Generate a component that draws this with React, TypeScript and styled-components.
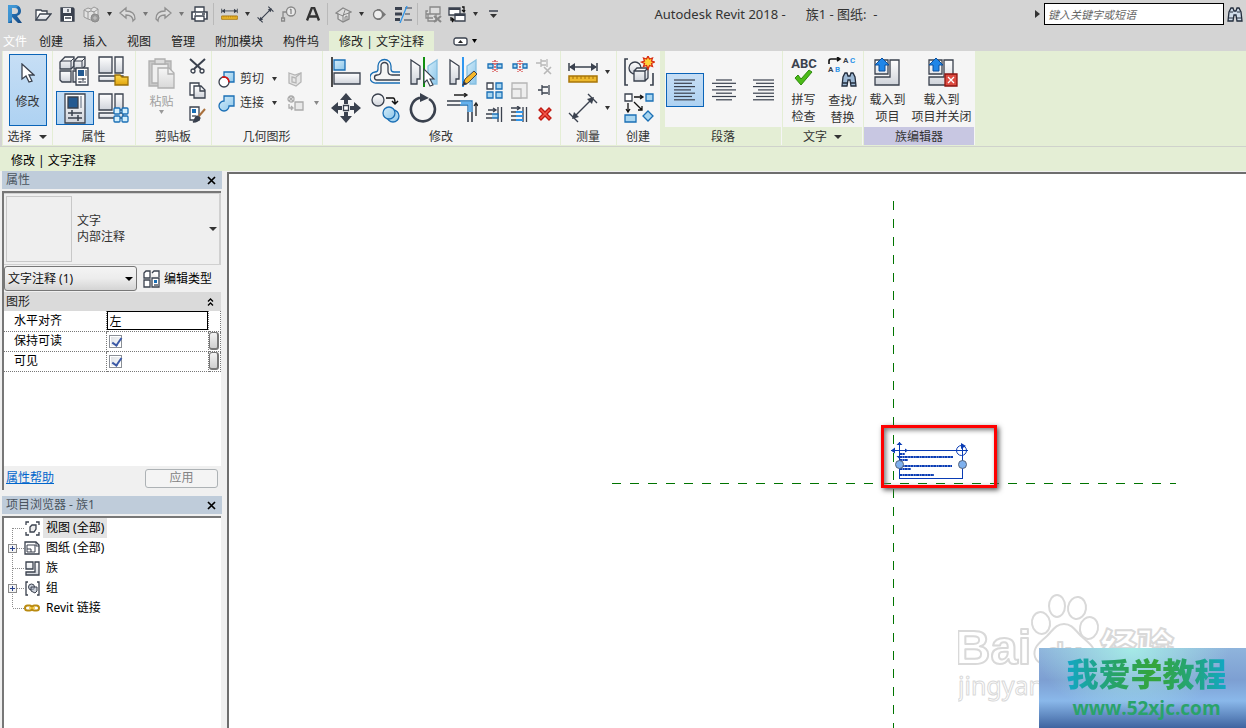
import React from "react";
import styled, { createGlobalStyle } from "styled-components";

const GlobalStyle = createGlobalStyle`
  * { box-sizing: border-box; }
  body {
    margin: 0;
    font: 12px/16px "Noto Sans", "Noto Sans CJK SC", sans-serif;
    color: #1e1e1e;
    background: #f0f0f0;
  }
  button, input, select { font: inherit; color: inherit; margin: 0; padding: 0; }
  svg { display: block; flex: none; }
`;

const ink = "#3a414e";
const blue = "#1a6fb5";
const sky = "#a9d6f0";
const green = "#e4eed5";

/* ---------- page frame ---------- */

const Page = styled.div`
  display: flex;
  flex-direction: column;
  min-height: 100vh;
  overflow: hidden;
`;

const TitleBar = styled.header`
  display: flex;
  align-items: center;
  height: 28px;
  padding-left: 3px;
  background: #d4d4d4;
`;

const QuickButton = styled.button<{ $gap?: boolean }>`
  display: flex;
  align-items: center;
  justify-content: center;
  width: 24px;
  height: 24px;
  margin-right: ${(p) => (p.$gap ? 4 : 0)}px;
  border: 0;
  background: none;
`;

const SearchButton = styled(QuickButton)`
  width: 22px;
`;

const CaretButton = styled.button`
  display: flex;
  align-items: center;
  justify-content: center;
  width: 12px;
  min-height: 24px;
  border: 0;
  background: none;
`;

const QuickDivider = styled.span`
  width: 1px;
  height: 22px;
  margin: 0 3px 0 2px;
  background: #b9b9b9;
`;

const WindowTitle = styled.h1`
  display: flex;
  flex: 1;
  justify-content: center;
  gap: 20px;
  margin: 0;
  padding-right: 8px;
  font-size: 13px;
  font-weight: 400;
  white-space: pre;
  color: #333;
`;

const SearchBox = styled.input`
  width: 180px;
  height: 22px;
  margin: 0 0 0 4px;
  padding: 0 3px;
  border: 1px solid #000;
  background: #fff;
  &::placeholder { color: #666; font-size: 11px; font-style: italic; opacity: 1; }
`;

const TabBar = styled.nav`
  display: flex;
  align-items: flex-end;
  height: 23px;
  padding-top: 3px;
  background: #d4d4d4;
`;

const Tab = styled.button<{ $file?: boolean; $active?: boolean }>`
  height: 20px;
  padding: ${(p) => (p.$file ? "2px 2px 0 3px" : "2px 10px 0")};
  border: 0;
  white-space: nowrap;
  background: ${(p) => (p.$active ? green : "none")};
  color: ${(p) => (p.$file ? "#fff" : "#222")};
`;

const TabToggle = styled.button`
  display: flex;
  align-items: center;
  gap: 4px;
  height: 20px;
  margin-left: 19px;
  border: 0;
  background: none;
`;

const Ribbon = styled.div`
  display: flex;
  height: 96px;
  padding-left: 2px;
  border-bottom: 1px solid #cfd2cc;
  background: ${green};
  box-shadow: inset 2px 0 #d4d4d4;
`;

const RibbonPanel = styled.section<{ $w: number; $apart?: boolean }>`
  display: flex;
  flex-direction: column;
  width: ${(p) => p.$w}px;
  margin-left: ${(p) => (p.$apart ? 4 : 0)}px;
  border: solid ${green};
  border-width: 0 0 1px 1px;
  background: #f5f5f5;
  flex: none;
`;

const PanelBody = styled.div<{ $pad?: string; $gap?: number }>`
  display: flex;
  flex: 1;
  align-items: flex-start;
  justify-content: center;
  gap: ${(p) => p.$gap ?? 0}px;
  padding: ${(p) => p.$pad ?? "3px 0 0"};
`;

const PanelTitle = styled.h2<{ $tone?: string }>`
  display: flex;
  align-items: center;
  justify-content: center;
  gap: 7px;
  height: 18px;
  margin: 0 1px 0 0;
  padding-top: 2px;
  font-size: 12px;
  font-weight: 400;
  color: #333;
  background: ${(p) => p.$tone ?? "none"};
`;

const Column = styled.div`
  display: flex;
  flex-direction: column;
`;

const ToolGrid = styled.div<{ $cols: number; $w: number; $h: number; $gap?: string }>`
  display: grid;
  grid-template-columns: repeat(${(p) => p.$cols}, ${(p) => p.$w}px);
  grid-auto-rows: ${(p) => p.$h}px;
  gap: ${(p) => p.$gap ?? "0"};
`;

const ToolButton = styled.button<{ $active?: boolean }>`
  display: flex;
  align-items: center;
  justify-content: center;
  border: 1px solid ${(p) => (p.$active ? "#0a64b8" : "transparent")};
  background: ${(p) => (p.$active ? "linear-gradient(#c6def5, #aed2f2)" : "none")};
`;

const TallButton = styled.button<{ $w: number; $active?: boolean; $muted?: boolean }>`
  display: flex;
  flex-direction: column;
  align-items: center;
  width: ${(p) => p.$w}px;
  height: 72px;
  padding-top: 2px;
  border: 1px solid ${(p) => (p.$active ? "#0a64b8" : "transparent")};
  background: ${(p) => (p.$active ? "linear-gradient(#c6def5, #aed2f2)" : "none")};
  color: ${(p) => (p.$muted ? "#a0a0a0" : "#333")};
  white-space: pre;
  line-height: 17px;
`;

const IconSlot = styled.span`
  display: flex;
  align-items: center;
  height: 32px;
  margin-bottom: 4px;
`;

const InlineTool = styled.div`
  display: flex;
  align-items: center;
  height: 24px;
`;

const InlineButton = styled.button<{ $w: number }>`
  display: flex;
  align-items: center;
  gap: 5px;
  width: ${(p) => p.$w}px;
  border: 0;
  background: none;
  color: #333;
`;

const OptionsBar = styled.div`
  height: 24px;
  padding: 6px 11px 0;
  color: #000;
  background: ${green};
`;

const Workspace = styled.div`
  display: flex;
  flex: 1;
`;

const SidePanels = styled.aside`
  display: flex;
  flex-direction: column;
  width: 220px;
  margin: 0 5px 0 2px;
  flex: none;
`;

const DockHeader = styled.header`
  display: flex;
  align-items: center;
  justify-content: space-between;
  height: 18px;
  padding: 0 4px;
  color: #4a545e;
  background: #bfccda;
`;

const CloseButton = styled.button`
  display: flex;
  padding: 2px;
  border: 0;
  background: none;
`;

const DockBody = styled.div<{ $fill?: boolean }>`
  display: flex;
  flex-direction: column;
  flex: ${(p) => (p.$fill ? "1" : "none")};
  min-height: ${(p) => (p.$fill ? 0 : 299)}px;
  margin: ${(p) => (p.$fill ? "2px 1px 0 0" : "2px 1px 6px 0")};
  border: solid #777;
  border-width: 2px 0 0 2px;
  background: ${(p) => (p.$fill ? "#fff" : "#f0f0f0")};
`;

/* ---------- properties palette ---------- */

const TypeSelector = styled.button`
  display: flex;
  align-items: center;
  height: 72px;
  padding: 2px;
  border: solid #d0d0d0;
  border-width: 1px 2px 1px 0;
  background: #efefef;
  color: #333;
  text-align: left;
`;

const Thumbnail = styled.span`
  width: 66px;
  height: 66px;
  margin-right: 5px;
  border: 1px solid #c8c8c8;
`;

const TypeName = styled.span`
  flex: 1;
`;

const FilterRow = styled.div`
  display: flex;
  align-items: center;
  height: 27px;
`;

const SelectWrap = styled.div`
  position: relative;
  width: 133px;
  height: 25px;
  svg { position: absolute; right: 4px; top: 11px; pointer-events: none; }
`;

const FilterSelect = styled.select`
  width: 100%;
  height: 100%;
  padding: 0 3px;
  appearance: none;
  border: 1px solid #777;
  border-radius: 3px;
  background: linear-gradient(#f4f4f4, #ececec 50%, #d4d4d4);
  color: #111;
`;

const EditTypeButton = styled.button`
  display: flex;
  align-items: center;
  gap: 4px;
  margin-left: 6px;
  border: 0;
  background: none;
  color: #000;
`;

const GroupHeader = styled.div`
  display: flex;
  align-items: center;
  justify-content: space-between;
  height: 19px;
  padding: 0 7px 0 2px;
  color: #222;
  background: #dadada;
`;

const PropertyArea = styled.div`
  flex: 1;
  background: #fff;
`;

const PropertyTable = styled.table`
  width: 100%;
  table-layout: fixed;
  border-collapse: collapse;
  color: #000;
  th, td {
    height: 20px;
    padding: 0;
    border: 1px dotted #777;
    border-left: 0;
    font-weight: 400;
    text-align: left;
  }
  tr:first-child > * { border-top: 0; }
  th { width: 102px; padding-left: 10px; }
  td:last-child { width: 12px; }
`;

const TextCell = styled.input`
  display: block;
  width: 100%;
  height: 19px;
  padding: 0 2px;
  border: 1px solid #000;
  background: #fff;
`;

const Check = styled.input`
  display: block;
  width: 13px;
  height: 13px;
  margin-left: 2px;
  appearance: none;
  border: 1px solid #8a8f96;
  background: linear-gradient(135deg, #dcdfe3, #fff);
  box-shadow: inset 0 0 0 1px #fff;
  && { margin-left: 2px; }
  &:checked::after {
    content: "";
    display: block;
    width: 4px;
    height: 8px;
    margin: 0 0 0 4px;
    border: solid #3c5aa6;
    border-width: 0 2px 2px 0;
    transform: rotate(35deg);
  }
`;

const AssociateButton = styled.button`
  display: block;
  width: 10px;
  height: 18px;
  border: 1px solid #777;
  border-width: 1px 2px 2px 1px;
  border-radius: 3px;
  background: linear-gradient(#f4f4f4, #cfcfcf);
`;

const DockFooter = styled.div`
  display: flex;
  align-items: center;
  justify-content: space-between;
  height: 24px;
  padding: 0 3px 0 2px;
`;

const HelpLink = styled.a`
  color: #0066cc;
`;

const ApplyButton = styled.button`
  width: 73px;
  height: 19px;
  border: 1px solid #adb2b5;
  border-radius: 3px;
  background: #f4f4f4;
  color: #838383;
`;

/* ---------- project browser ---------- */

const Tree = styled.ul`
  margin: 0;
  padding: 0;
  list-style: none;
  color: #000;
`;

const TreeRow = styled.li`
  display: flex;
  align-items: center;
  height: 20px;
  padding-left: 4px;
`;

const IconCell = styled.span`
  display: flex;
  justify-content: center;
  width: 16px;
  margin-right: 3px;
`;

const TreeLabel = styled.span<{ $selected?: boolean }>`
  padding: 2px 3px;
  background: ${(p) => (p.$selected ? "#e3e3e3" : "none")};
`;

/* ---------- drawing area ---------- */

const Canvas = styled.main`
  position: relative;
  flex: 1;
  margin-top: 1px;
  overflow: hidden;
  border: solid #6e6e6e;
  border-width: 2px 0 0 2px;
  background: #fff;
`;

const Sheet = styled.svg`
  position: absolute;
  inset: 0;
  width: 100%;
  height: 100%;
`;

const Highlight = styled.div`
  position: absolute;
  left: 652px;
  top: 251px;
  width: 116px;
  height: 63px;
  border: 3px solid #fe0000;
  box-shadow: 2px 2px 5px #555, inset 2px 2px 5px #777;
`;

const Watermark = styled.svg`
  position: absolute;
  right: 66px;
  bottom: 20px;
`;

const Banner = styled.div`
  position: absolute;
  right: 0;
  bottom: 0;
  display: flex;
  flex-direction: column;
  align-items: center;
  width: 207px;
  height: 80px;
  padding: 5px 0 0 8px;
  background:
    radial-gradient(ellipse at 45% 0, rgba(168, 240, 232, 0.9), rgba(150, 215, 235, 0) 60%),
    linear-gradient(#8fb4dc, #7d9fd2 40%, #8ab8ea 66%, #3f64a0);
`;

const BannerName = styled.strong`
  font: 900 32px/38px "Noto Sans CJK SC", sans-serif;
  color: transparent;
  background: linear-gradient(90deg, #12a7c8, #27a368 30%, #35a53a 55%, #22a57d 80%, #12a7c8);
  background-clip: text;
`;

const BannerUrl = styled.span`
  font: 700 19px/34px "Open Sans", sans-serif;
  color: #2aa36a;
`;

/* ---------- icons ---------- */

type IconProps = { w: number; h?: number; children: React.ReactNode };

const Icon = ({ w, h = w, children }: IconProps) => (
  <svg width={w} height={h} viewBox={`0 0 ${w} ${h}`} fill="none" stroke={ink} strokeWidth="1.3" aria-hidden="true">
    {children}
  </svg>
);

const Caret = ({ color = "#333", w = 5 }: { color?: string; w?: number }) => (
  <svg width={w} height="4" viewBox="0 0 8 5" preserveAspectRatio="none" aria-hidden="true">
    <path d="M0 0h8L4 5z" fill={color} />
  </svg>
);

const HiddenDefs = styled.svg`
  position: absolute;
`;

const Gradients = () => (
  <HiddenDefs width="0" height="0" aria-hidden="true">
    <defs>
      <linearGradient id="metal" x2="0" y2="1"><stop stopColor="#fff" /><stop offset="1" stopColor="#cfd3da" /></linearGradient>
      <linearGradient id="dim" x2="0" y2="1"><stop stopColor="#f6f6f6" /><stop offset="1" stopColor="#d8d8d8" /></linearGradient>
      <linearGradient id="gold" x2="0" y2="1"><stop stopColor="#ffd94d" /><stop offset="1" stopColor="#e0a40c" /></linearGradient>
      <linearGradient id="water" x2="1" y2="1"><stop stopColor="#d5edf9" /><stop offset="1" stopColor="#8cc6ea" /></linearGradient>
      <linearGradient id="logo" x2="1" y2="1"><stop stopColor="#2b8ad6" /><stop offset="1" stopColor="#15477f" /></linearGradient>
    </defs>
  </HiddenDefs>
);

const Logo = () => (
  <Icon w={16} h={20}>
    <path d="M1 1v18h4v-6l6 6h4l-5-7c3-1 4-3 4-5 0-4-3-6-6-6z" fill="url(#logo)" stroke="none" />
    <path d="M5 4h3c2 0 3 1 3 3s-1 3-3 3H5z" fill="#d4d4d4" stroke="none" />
    <path d="M1 1v18l4-3V4h4l2-2-3-1z" fill="#52a8e0" stroke="none" opacity=".6" />
  </Icon>
);
const Open = () => <Icon w={17}><path d="M1 14V4h5l1 1h5v3" fill="#fff" /><path d="M1 14l4-6h11l-5 6z" fill="url(#metal)" /></Icon>;
const Save = () => <Icon w={15}><path d="M1 1h12l1 1v12H1z" fill={ink} /><path d="M3 1h8v5H3z" fill="#e8eaee" stroke="none" /><path d="M4 9h8v5H4z" fill="#fff" stroke="none" /><path d="M5 11h6M8 2v3" /></Icon>;
const Sync = () => (
  <Icon w={17}><g stroke="#999" strokeWidth="1" fill="#e2e2e2"><path d="M1 4l4-2 3 1 3-2 4 2v7l-4 2-3 2-3-1-4-2z" /><path d="M1 4l4 2 3-1 3 1 4-3M5 6v7M8 3v2M11 5v4" /><circle cx="12" cy="12" r="4" fill="#999" stroke="#8a8a8a" /><path d="M10 12h4M12 10v4" stroke="#c4c4c4" /></g></Icon>
);
const Undo = () => <Icon w={17}><path d="M1 7l6-5v3c6 0 9 3 9 8l-2 2c0-4-3-6-7-6v3z" stroke="#909090" fill="#dcdcdc" /></Icon>;
const Redo = () => <Icon w={17}><path d="M16 7l-6-5v3c-6 0-9 3-9 8l2 2c0-4 3-6 7-6v3z" stroke="#909090" fill="#dcdcdc" /></Icon>;
const Print = () => <Icon w={17}><path d="M4 6V1h9v5" fill="#fff" /><path d="M1 6h15v7H1z" fill="#fff" strokeWidth="1.6" /><path d="M4 10h9v5H4z" fill="#fff" /><path d="M4 8h1M11 8h3" /></Icon>;
const Ruler = ({ w = 17 }: { w?: number }) => (
  <svg width={w} height={Math.round(w * 0.84)} viewBox="0 0 30 25" fill="none" stroke={ink} strokeWidth="1.5" aria-hidden="true">
    <path d="M2 7h26M1 3v8M29 3v8" /><path d="M1 7l6-4v8zM29 7l-6-4v8z" fill={ink} stroke="none" />
    <path d="M1 16h28v6H1z" fill="#edb92e" stroke="#a87508" /><path d="M5 16v3M9 16v3M13 16v3M17 16v3M21 16v3M25 16v3" stroke="#a87508" strokeWidth="1" />
  </svg>
);
const AlignDim = ({ w = 17 }: { w?: number }) => (
  <svg width={w} height={w} viewBox="0 0 30 30" fill="none" stroke={ink} strokeWidth={w > 20 ? 1.4 : 2} aria-hidden="true">
    <path d="M6 24L24 6M1 20l9 9M20 1l9 9" /><path d="M4 26l2-7 5 5zM26 4l-2 7-5-5z" fill={ink} stroke="none" />
  </svg>
);
const Tag = () => <Icon w={16}><g stroke="#888"><circle cx="10" cy="5.5" r="4.5" fill="#e8e8e8" /><path d="M10 3v5M9 4l1-1M6 6H2v6M.5 12h3v3h-3z" /></g></Icon>;
const LetterA = () => <Icon w={14}><path d="M1 13.500L6 .5h2l5 13M3.500 9.500h7" strokeWidth="2.400" stroke="#333" /></Icon>;
const House = () => <Icon w={17}><path d="M1 7l7-5 8 4-2 1v6l-6 3-5-3V8z" fill="#ddd" stroke="#888" /><path d="M8 16V9l6-2M1 7l7 3 2-6M10 15v-4l2-1v4" stroke="#888" strokeWidth="1" /></Icon>;
const SectionMark = () => <Icon w={15}><path d="M5 2h3l6 5.500L8 13H5" fill="#777" stroke="none" /><circle cx="6" cy="7.500" r="4.500" fill="#eee" stroke="#777" /></Icon>;
const ThinLines = () => <Icon w={17}><path d="M0 2.500h7M0 8h7M0 13.500h5" strokeWidth="3" /><path d="M10 2h7M10 8h5M9 14h8" strokeWidth="1" /><path d="M12 0L5 17" stroke="#2f94e8" /></Icon>;
const CloseHidden = () => <Icon w={17}><g stroke="#888"><path d="M5 1h10v7H5zM3 5H1v7h7M1 8h10v7H3V8" fill="#ddd" /><path d="M9 10l7 6M16 10l-7 6" strokeWidth="2.200" /></g></Icon>;
const SwitchWin = () => <Icon w={18} h={17}><path d="M1 2h11v7H1z" fill="#fff" /><path d="M7 8h10v7H7z" fill="#fff" /><path d="M1 3h11M7 9h10" strokeWidth="2" /><path d="M14 1h2v4M14 4l2 2 1-2M3 11v3h2M4 12l2 2-2 2" stroke="#111" /></Icon>;
const Customize = () => <Icon w={9} h={8}><path d="M0 1h9" strokeWidth="1.5" /><path d="M1 4h7L4.500 8z" fill="#333" stroke="none" /></Icon>;
const Binoculars = () => (
  <Icon w={16} h={15}><path d="M1 14l1-9 2-4h2l1 3h2l1-3h2l2 4 1 9h-5l-1-6H7l-1 6z" fill="#cfdbe8" stroke="#222c3c" /><path d="M2 11h4M10 11h4M3 5h3M10 5h3" stroke="#222c3c" strokeWidth="1" /></Icon>
);
const PlayMark = () => <Icon w={5} h={8}><path d="M0 0l5 4-5 4z" fill="#333" stroke="none" /></Icon>;

const Cursor = () => <Icon w={14} h={21}><path d="M1 1v15l4-3 3 6 3-1-3-6h5z" fill="#fff" /></Icon>;

const TypeProps = () => (
  <Icon w={31}>
    <path d="M3 4l3-3h9v9l-3 3H1V6z" fill="url(#metal)" /><path d="M15 6l2-3 2-2h7v9l-3 3h-8z" fill="url(#metal)" />
    <path d="M1 15h11v11H3l-2-2zM14 15h6v11h-6z" fill="url(#metal)" />
    <path d="M2 5h10l3-3M12 5v8M15 5h8l3-3M23 5v6" strokeWidth="1" />
    <path d="M17 12h12v17H17z" fill="#fff" /><path d="M19 14h6v6h-6z" fill="#245a91" stroke="none" /><path d="M27 14v6M19 23h8M19 26h8M24 22v3M21 25v2" strokeWidth="1" />
  </Icon>
);
const FamilyTypes = ({ cubes }: { cubes?: boolean }) => (
  <Icon w={31}>
    <path d="M1 1h13v16H1zM17 1h8v16h-8z" fill="url(#metal)" /><path d="M1 20h24v5H1z" fill="url(#metal)" />
    {cubes ? (
      <g stroke={blue} fill="#d4effc">
        <rect x="16" y="15" width="6" height="6" rx="1" /><rect x="24" y="15" width="6" height="6" rx="1" />
        <rect x="16" y="23" width="6" height="6" rx="1" /><rect x="24" y="23" width="6" height="6" rx="1" />
      </g>
    ) : (
      <path d="M17 29V19h5l2 2h6v8z" fill="url(#gold)" stroke="#9a7008" />
    )}
  </Icon>
);
const Properties = () => (
  <Icon w={22} h={31}><path d="M1 1h20v29H1z" fill="url(#metal)" /><path d="M4 4h10v11H4z" fill="#245a91" /><path d="M17 3v12" strokeWidth="2" stroke="#a6adb8" /><path d="M4 20h14M4 25h14M8 17v6M14 22v6" strokeWidth="1.5" /></Icon>
);
const Paste = () => (
  <Icon w={28} h={31}><g stroke="#b0b0b0"><path d="M1 3h22v25H1z" fill="#c9c9c9" /><path d="M4 6h16v19H4z" fill="#efefef" /><path d="M7 1h10v5H7z" fill="#ddd" /><path d="M10 10h11l5 5v15H10z" fill="url(#dim)" /><path d="M20 10v6h6" /></g></Icon>
);
const Scissors = () => <Icon w={17}><path d="M1 1l11 10M16 1L5 11" strokeWidth="2" /><circle cx="4" cy="13" r="2" /><circle cx="13" cy="13" r="2" /></Icon>;
const Copy = () => <Icon w={17}><path d="M1 1h9v12H1z" fill="#fff" /><path d="M5 4h7l4 4v8H5z" fill="url(#metal)" /><path d="M11 4v5h5" /></Icon>;
const MatchType = () => <Icon w={17}><path d="M1 1h9v13H1z" fill="#fff" /><path d="M3 3h4v4H3z" fill={blue} stroke="none" /><path d="M3 10h4" /><path d="M16 3l-6 7" stroke="#a9703c" strokeWidth="2" /><path d="M4 16c2-1 1-4 4-6l3 2c-1 3-4 4-7 4z" fill={ink} /></Icon>;
const Cut = () => <Icon w={17}><path d="M6 1h10v10H6z" fill="url(#water)" stroke={blue} /><circle cx="6" cy="11" r="5" fill="#fff" /><path d="M4 6.300c4-1 7 1 7 5" stroke="#e01010" strokeWidth="1.600" /></Icon>;
const Join = () => <Icon w={17}><path d="M6 1h10v10h-5a5 5 0 1 1-5-5z" fill="url(#water)" stroke={blue} /></Icon>;
const CopeGray = () => <Icon w={16}><g stroke="#b5b5b5" fill="#e6e6e6"><path d="M2 2l6 2 6-2v9l-5 4-7-3z" /><path d="M5 6l4 1v5l-4-1zM14 2L9 6" /></g></Icon>;
const SplitGray = () => <Icon w={17}><g stroke="#aaa"><circle cx="4" cy="4" r="3" /><path d="M2 2l4 4M6 2L2 6M8 7h8v8H8z" fill="#e9e9e9" /><path d="M2 9v4h3M4 11l2 2-2 2" /></g></Icon>;

const AlignTool = () => <Icon w={30}><path d="M1 0v30" stroke="#111" strokeWidth="1.5" /><path d="M3 3h11v10H3z" fill="url(#water)" stroke={blue} /><path d="M3 16h26v11H3z" fill="url(#metal)" /></Icon>;
const Offset = () => (
  <Icon w={30}>
    <path d="M30 15h-6c-2 0-3-1-3-3V9a6.500 6.500 0 0 0-13 0v3c0 2-1 3-3 3a5.500 5.500 0 0 0 1 11h24" stroke={blue} />
    <path d="M30 18h-8c-3 0-4-2-4-4V9a3.500 3.500 0 0 0-7 0v5c0 3-2 4-4 4a2.500 2.500 0 0 0 0 5h23" />
  </Icon>
);
const MirrorPick = () => (
  <Icon w={30}>
    <path d="M2 3l9 6v13H8v5H2z" fill="url(#metal)" /><path d="M28 3l-9 6v13h3v5h6z" fill="url(#water)" stroke="#85bfe0" /><path d="M15 0v30" stroke="#109010" strokeWidth="2" />
    <path d="M15 12v14l3-3 3 6 3-1-3-6h4z" fill="#fff" strokeWidth="1.100" />
  </Icon>
);
const MirrorDraw = () => (
  <Icon w={30}>
    <path d="M2 3l9 6v13H8v5H2z" fill="url(#metal)" /><path d="M28 3l-9 6v13h3v5h6z" fill="url(#water)" stroke="#85bfe0" /><path d="M15 0v30" stroke="#3097f0" strokeWidth="2" />
    <path d="M15 28l2-6 9-8 3 3-9 9z" fill="#f5b72a" strokeWidth="1" /><path d="M15 28l1-3 2 2z" fill="#111" />
  </Icon>
);
const Move = () => (
  <Icon w={30}><path d="M15 0l6 7h-4v4h-4V7H9zM15 30l6-7h-4v-4h-4v4H9zM0 15l7-6v4h4v4H7v4zM30 15l-7-6v4h-4v4h4v4z" fill={ink} stroke="none" /><path d="M12.500 12.500h5v5h-5z" fill="#fff" /></Icon>
);
const CopyTool = () => (
  <Icon w={30}><circle cx="8" cy="7" r="6" fill="url(#metal)" /><path d="M16 5h7c2 0 2 2 2 5M22 8l3 3 3-3" stroke="#111" strokeWidth="1.5" /><circle cx="23" cy="23" r="6" fill="url(#water)" stroke={blue} /><circle cx="19" cy="20" r="6" fill="url(#water)" stroke={blue} /></Icon>
);
const Rotate = () => <Icon w={30}><path d="M20 6A12 12 0 1 1 10 5h4" strokeWidth="2.600" /><path d="M11 0l9 5-9 4z" fill={ink} stroke="none" /></Icon>;
const Trim = () => <Icon w={31}><path d="M0 8h13M0 12h13M21 19v10M25 19v10" strokeWidth="1.600" /><path d="M13 8h12v11M13 12h8v7" stroke={blue} /><path d="M14 10h9v9" stroke="#63b2ef" strokeWidth="2.600" /><path d="M7 2h13M17 0l3 2-3 2M29 23V10M27 13l2-3 2 3" stroke="#222" /></Icon>;
const SplitEl = ({ gap }: { gap?: boolean }) => (
  <Icon w={16} h={12}>
    {gap ? <path d="M1 4h4v4H1zM11 4h4v4h-4z" fill={sky} stroke={blue} /> : <path d="M1 4h5v4H1zM10 4h5v4h-5z" fill={sky} stroke={blue} />}
    <path d="M8 0v12" stroke="#d02020" strokeWidth="1.200" strokeDasharray="2 1" />
    <path d="M6 1v3M10 1v3M6 9v3M10 9v3" stroke="#d02020" strokeWidth="1" strokeDasharray="1 1" />
  </Icon>
);
const UnpinGray = () => <Icon w={17}><g stroke="#b8b8b8"><path d="M0 5h5M5 1v8M5 3h5M5 7h5M11 1v8" /><path d="M8 9l7 7M15 9l-7 7" strokeWidth="1.600" /></g></Icon>;
const ArrayTool = () => <Icon w={17}><path d="M1 1h6v6H1z" fill="#fff" /><path d="M10 1h6v6h-6zM1 10h6v6H1zM10 10h6v6h-6z" fill={sky} stroke={blue} /></Icon>;
const ScaleGray = () => <Icon w={17}><g stroke="#b5b5b5" fill="#eee"><path d="M1 1h15v15H1z" /><path d="M1 7h9v9H1z" /></g></Icon>;
const Pin = () => <Icon w={13} h={12}><path d="M0 6h4M4 1v10M4 3h6M4 9h6M11 1v10" /></Icon>;
const TrimOne = ({ many }: { many?: boolean }) => (
  <Icon w={17}><path d="M12 1v15M15.500 1v15" />
    {many ? <><path d="M0 2h9M6 0l3 2-3 2M0 6h5M0 10h5M0 14h5" /><path d="M5 6h7M5 10h7M5 14h7" stroke="#2f94e8" strokeWidth="2" /></> : <><path d="M2 4h8M7 2l3 2-3 2M0 8h6M0 12h6" /><path d="M6 8h6v4H6" stroke={blue} fill={sky} /></>}
  </Icon>
);
const DeleteX = () => <Icon w={14}><path d="M3 1l4 4 4-4 2 2-4 4 4 4-2 2-4-4-4 4-2-2 4-4-4-4z" fill="#f4584a" stroke="#c01a12" /></Icon>;
const CreateSimilar = () => (
  <Icon w={32}><path d="M5 3H2v26h3M27 29h3V17" strokeWidth="1.600" /><circle cx="12" cy="12" r="6" fill="url(#metal)" /><path d="M11 15h11v10H11zM11 15l3-3h11v10l-3 3M22 15l3-3" fill="url(#metal)" /><path d="M25 0l1.500 3 3-1-1 3 3 1-3 1.500 1 3-3-1L25 13l-1.500-3.500-3 1 1-3-3-1.500 3-1-1-3 3 1z" fill="#ffd23a" stroke="#d92b10" /></Icon>
);
const CreateGroup = () => (
  <Icon w={30}><path d="M1 1h7v7H1z" fill="#fff" /><path d="M22 1h7v7h-7zM1 22h11v7H1zM24 18l5 5-5 5-5-5z" fill={sky} stroke={blue} /><path d="M10 4h9M16 2l3 2-3 2M4 10v8M2 16l2 3 2-3M10 9l8 8M18 13v4h-4" stroke="#111" /></Icon>
);
const Lines = ({ rows }: { rows: [number, number][] }) => (
  <Icon w={24} h={22}>{rows.map(([a, b], i) => <path key={i} d={`M${a} ${1 + i * 3.3}H${b}`} strokeWidth="1.200" />)}</Icon>
);
const Spelling = () => (
  <Icon w={28} h={30}><text x="14" y="11" textAnchor="middle" fontSize="13" fontWeight="700" fontFamily="Roboto, sans-serif" fill={ink} stroke="none">ABC</text><path d="M5 21l3-3 3 4 8-9 3 2-11 13z" fill="#4cbb17" stroke="#2d8a0c" strokeWidth="1" /></Icon>
);
const FindReplace = () => (
  <Icon w={31}><path d="M2 7V4q0-2 2-2h9M10 0l3 2-3 2" stroke="#111" strokeWidth="1.600" />
    <g fontSize="8" fontWeight="700" fontFamily="Roboto, sans-serif" stroke="none" fill={ink}><text x="16" y="6">A</text><text x="23" y="6" fill="#2f94e8">C</text><text x="1" y="15">A</text><text x="8" y="15" fill="#2f94e8">B</text></g>
    <g transform="translate(14 14)"><path d="M1 15l1-9 2-4h2l1 3h2l1-3h2l2 4 1 9h-5l-1-6H7l-1 6z" fill="#9db8d3" stroke="#222c3c" /><path d="M2 12h4M10 12h4" stroke="#222c3c" /></g>
  </Icon>
);
const LoadIcon = ({ close }: { close?: boolean }) => (
  <Icon w={32} h={30}><path d="M3 3h13v14H3zM3 20h15V3h9v25H3z" fill="url(#metal)" /><path d="M10 1l7 7h-4v6H7V8H3z" fill="#1f86e8" stroke="#0b4f9c" strokeWidth="1" />
    {close && <><path d="M19 17h12v12H19z" fill="#dc4a40" stroke="#8c1510" /><path d="M22 20l6 6M28 20l-6 6" stroke="#fff" /></>}
  </Icon>
);
const CloseGlyph = () => <Icon w={9}><path d="M1 1l7 7M8 1L1 8" stroke="#000" strokeWidth="1.700" /></Icon>;
const EditType = () => <Icon w={17} h={18}><path d="M1 3l2-2h4v7H1zM9 3l2-2h5v6M1 10h6v7H1z" fill="#fff" /><path d="M9 8h7v9H9z" fill="#fff" /><path d="M11 10h3v3h-3z" fill={blue} stroke="none" /><path d="M11 15h4" /></Icon>;
const Chevrons = () => <Icon w={7} h={8}><path d="M1 3.500l2.500-2.500L6 3.500M1 7.500L3.500 5 6 7.500" stroke="#000" /></Icon>;
const PanelToggle = () => <Icon w={15} h={9}><rect x="1" y="1" width="13" height="7" rx="2" fill="#fff" /><path d="M5 6l2.500-3L10 6z" fill="#222" stroke="none" /></Icon>;

const Branch = ({ box, first, last }: { box?: boolean; first?: boolean; last?: boolean }) => (
  <svg width="16" height="20" viewBox="0 0 16 20" fill="none" aria-hidden="true">
    <path d={`M4.500 ${first ? 10 : 0}V${last ? 10 : 20}M5 10.500h11`} stroke="#8c8c8c" strokeDasharray="1 1" />
    {box && <><rect x=".5" y="6.500" width="8" height="8" fill="#f4f4f4" stroke="#8a8a8a" /><path d="M2 10.500h5M4.500 8v5" stroke="#27408b" /></>}
  </svg>
);
const ViewsIcon = () => <Icon w={15}><path d="M4 1H1v3M11 1h3v3M1 11v3h3M14 11v3h-3" /><path d="M5 6l2-2h4v4L9 11H5z" fill="#eee" /></Icon>;
const SheetsIcon = () => <Icon w={16} h={14}><path d="M1 1h11l3 3v9H1z" fill="#fff" /><path d="M3 4h8v7H3zM3 8h4v3M12 1v4h3" strokeWidth="1" /></Icon>;
const FamiliesIcon = () => <Icon w={15}><path d="M1 1h7v7H1zM10 1h4v13H1v-3h9z" fill="url(#metal)" /></Icon>;
const GroupsIcon = () => <Icon w={15}><path d="M3 1H1v13h2M12 1h2v13h-2" /><circle cx="6.500" cy="6" r="3" fill="#c7ccd6" strokeWidth="1" /><path d="M6 6h6v4l-2 2-4-2z" fill="#aeb6c4" fillOpacity=".6" strokeWidth="1" /></Icon>;
const LinksIcon = () => <Icon w={16} h={10}><g stroke="#b98a10" strokeWidth="2"><rect x="1" y="2.500" width="7" height="5" rx="2.500" /><rect x="8" y="2.500" width="7" height="5" rx="2.500" /></g><path d="M5 5h6" stroke="#f2c22e" strokeWidth="1.500" /></Icon>;

/* ---------- sections ---------- */

const Quick = ({ label, children, gap }: { label: string; children: React.ReactNode; gap?: boolean }) => (
  <QuickButton aria-label={label} $gap={gap}>{children}</QuickButton>
);
const Drop = ({ label, color }: { label: string; color?: string }) => (
  <CaretButton aria-label={label}><Caret color={color} /></CaretButton>
);
const Tool = ({ label, children, active }: { label: string; children: React.ReactNode; active?: boolean }) => (
  <ToolButton aria-label={label} $active={active}>{children}</ToolButton>
);

const tabs = ["创建", "插入", "视图", "管理", "附加模块", "构件坞"];

const Header = () => (
  <TitleBar>
    <Quick label="应用程序菜单" gap><Logo /></Quick>
    <Quick label="打开"><Open /></Quick>
    <Quick label="保存"><Save /></Quick>
    <Quick label="同步"><Sync /></Quick>
    <Drop label="同步选项" />
    <Quick label="放弃"><Undo /></Quick>
    <Drop label="放弃列表" color="#777" />
    <Quick label="重做"><Redo /></Quick>
    <Drop label="重做列表" color="#777" />
    <Quick label="打印"><Print /></Quick>
    <QuickDivider />
    <Quick label="测量"><Ruler /></Quick>
    <Drop label="测量选项" />
    <Quick label="对齐标注"><AlignDim /></Quick>
    <Quick label="标记"><Tag /></Quick>
    <Quick label="文字"><LetterA /></Quick>
    <QuickDivider />
    <Quick label="三维视图"><House /></Quick>
    <Drop label="三维视图选项" />
    <Quick label="剖面"><SectionMark /></Quick>
    <Quick label="细线"><ThinLines /></Quick>
    <QuickDivider />
    <Quick label="关闭隐藏窗口"><CloseHidden /></Quick>
    <Quick label="切换窗口"><SwitchWin /></Quick>
    <Drop label="窗口列表" />
    <Quick label="自定义快速访问工具栏"><Customize /></Quick>
    <WindowTitle><span>Autodesk Revit 2018 -</span><span>族1 - 图纸:  -</span></WindowTitle>
    <PlayMark />
    <SearchBox aria-label="搜索" placeholder="键入关键字或短语" />
    <SearchButton aria-label="查找"><Binoculars /></SearchButton>
  </TitleBar>
);

const RibbonTools = () => (
  <Ribbon>
    <RibbonPanel $w={50}>
      <PanelBody><TallButton $w={38} $active><IconSlot><Cursor /></IconSlot>修改</TallButton></PanelBody>
      <PanelTitle>选择<Caret w={8} /></PanelTitle>
    </RibbonPanel>
    <RibbonPanel $w={83}>
      <PanelBody>
        <ToolGrid $cols={2} $w={38} $h={34} $gap="3px 1px">
          <Tool label="类型属性"><TypeProps /></Tool>
          <Tool label="族类别"><FamilyTypes /></Tool>
          <Tool label="属性" active><Properties /></Tool>
          <Tool label="族类型"><FamilyTypes cubes /></Tool>
        </ToolGrid>
      </PanelBody>
      <PanelTitle>属性</PanelTitle>
    </RibbonPanel>
    <RibbonPanel $w={76}>
      <PanelBody $pad="3px 0 0 5px" $gap={5}>
        <TallButton $w={38} $muted><IconSlot><Paste /></IconSlot>粘贴<Caret color="#999" /></TallButton>
        <ToolGrid $cols={1} $w={24} $h={24}>
          <Tool label="剪切到剪贴板"><Scissors /></Tool>
          <Tool label="复制到剪贴板"><Copy /></Tool>
          <Tool label="匹配类型属性"><MatchType /></Tool>
        </ToolGrid>
      </PanelBody>
      <PanelTitle>剪贴板</PanelTitle>
    </RibbonPanel>
    <RibbonPanel $w={111}>
      <PanelBody $pad="16px 0 0 6px">
        <Column>
          <InlineTool>
            <InlineButton $w={50}><Cut />剪切</InlineButton>
            <Drop label="剪切选项" />
            <ToolGrid $cols={1} $w={30} $h={24}><Tool label="连接端切割"><CopeGray /></Tool></ToolGrid>
          </InlineTool>
          <InlineTool>
            <InlineButton $w={50}><Join />连接</InlineButton>
            <Drop label="连接选项" />
            <ToolGrid $cols={1} $w={30} $h={24}><Tool label="拆分面"><SplitGray /></Tool></ToolGrid>
            <Drop label="拆分面选项" color="#888" />
          </InlineTool>
        </Column>
      </PanelBody>
      <PanelTitle>几何图形</PanelTitle>
    </RibbonPanel>
    <RibbonPanel $w={238}>
      <PanelBody>
        <ToolGrid $cols={4} $w={39} $h={36}>
          <Tool label="对齐"><AlignTool /></Tool>
          <Tool label="偏移"><Offset /></Tool>
          <Tool label="镜像 - 拾取轴"><MirrorPick /></Tool>
          <Tool label="镜像 - 绘制轴"><MirrorDraw /></Tool>
          <Tool label="移动"><Move /></Tool>
          <Tool label="复制"><CopyTool /></Tool>
          <Tool label="旋转"><Rotate /></Tool>
          <Tool label="修剪/延伸为角"><Trim /></Tool>
        </ToolGrid>
        <ToolGrid $cols={3} $w={25} $h={24}>
          <Tool label="拆分图元"><SplitEl /></Tool>
          <Tool label="用间隙拆分"><SplitEl gap /></Tool>
          <Tool label="解锁"><UnpinGray /></Tool>
          <Tool label="阵列"><ArrayTool /></Tool>
          <Tool label="缩放"><ScaleGray /></Tool>
          <Tool label="锁定"><Pin /></Tool>
          <Tool label="修剪/延伸单个图元"><TrimOne /></Tool>
          <Tool label="修剪/延伸多个图元"><TrimOne many /></Tool>
          <Tool label="删除"><DeleteX /></Tool>
        </ToolGrid>
      </PanelBody>
      <PanelTitle>修改</PanelTitle>
    </RibbonPanel>
    <RibbonPanel $w={56}>
      <PanelBody>
        <ToolGrid $cols={1} $w={38} $h={36}>
          <Tool label="测量两点"><Ruler w={30} /></Tool>
          <Tool label="对齐尺寸标注"><AlignDim w={30} /></Tool>
        </ToolGrid>
        <ToolGrid $cols={1} $w={12} $h={36}>
          <Drop label="测量选项" />
          <Drop label="标注选项" />
        </ToolGrid>
      </PanelBody>
      <PanelTitle>测量</PanelTitle>
    </RibbonPanel>
    <RibbonPanel $w={44}>
      <PanelBody>
        <ToolGrid $cols={1} $w={38} $h={36}>
          <Tool label="创建类似实例"><CreateSimilar /></Tool>
          <Tool label="创建组"><CreateGroup /></Tool>
        </ToolGrid>
      </PanelBody>
      <PanelTitle>创建</PanelTitle>
    </RibbonPanel>
    <RibbonPanel $w={118} $apart>
      <PanelBody $pad="22px 0 0">
        <ToolGrid $cols={3} $w={38} $h={34} $gap="0 1px">
          <Tool label="左对齐" active><Lines rows={[[1, 22], [1, 19], [1, 22], [1, 18], [1, 22], [1, 19], [1, 22]]} /></Tool>
          <Tool label="居中对齐"><Lines rows={[[4, 20], [0, 24], [4, 20], [0, 24], [4, 20], [0, 24], [4, 20]]} /></Tool>
          <Tool label="右对齐"><Lines rows={[[2, 23], [5, 23], [2, 23], [7, 23], [2, 23], [5, 23], [2, 23]]} /></Tool>
        </ToolGrid>
      </PanelBody>
      <PanelTitle $tone={green}>段落</PanelTitle>
    </RibbonPanel>
    <RibbonPanel $w={81}>
      <PanelBody $gap={1}>
        <TallButton $w={38}><IconSlot><Spelling /></IconSlot>{"拼写\n检查"}</TallButton>
        <TallButton $w={38}><IconSlot><FindReplace /></IconSlot>{"查找/\n替换"}</TallButton>
      </PanelBody>
      <PanelTitle $tone={green}>文字<Caret w={8} /></PanelTitle>
    </RibbonPanel>
    <RibbonPanel $w={112}>
      <PanelBody>
        <TallButton $w={44}><IconSlot><LoadIcon /></IconSlot>{"载入到\n项目"}</TallButton>
        <TallButton $w={64}><IconSlot><LoadIcon close /></IconSlot>{"载入到\n项目并关闭"}</TallButton>
      </PanelBody>
      <PanelTitle $tone="#c8c7e2">族编辑器</PanelTitle>
    </RibbonPanel>
  </Ribbon>
);

const PropertiesPalette = () => (
  <>
    <DockHeader>属性<CloseButton aria-label="关闭属性"><CloseGlyph /></CloseButton></DockHeader>
    <DockBody>
      <TypeSelector>
        <Thumbnail />
        <TypeName>文字<br />内部注释</TypeName>
        <Caret w={8} />
      </TypeSelector>
      <FilterRow>
        <SelectWrap>
          <FilterSelect aria-label="属性过滤器"><option>文字注释 (1)</option></FilterSelect>
          <Caret w={8} color="#000" />
        </SelectWrap>
        <EditTypeButton><EditType />编辑类型</EditTypeButton>
      </FilterRow>
      <GroupHeader>图形<Chevrons /></GroupHeader>
      <PropertyArea>
        <PropertyTable>
          <tbody>
            <tr><th scope="row"><label htmlFor="align">水平对齐</label></th><td><TextCell id="align" defaultValue="左" /></td><td /></tr>
            <tr><th scope="row"><label htmlFor="readable">保持可读</label></th><td><Check id="readable" type="checkbox" defaultChecked /></td><td><AssociateButton aria-label="关联保持可读" /></td></tr>
            <tr><th scope="row"><label htmlFor="visible">可见</label></th><td><Check id="visible" type="checkbox" defaultChecked /></td><td><AssociateButton aria-label="关联可见" /></td></tr>
          </tbody>
        </PropertyTable>
      </PropertyArea>
      <DockFooter><HelpLink href="#help">属性帮助</HelpLink><ApplyButton>应用</ApplyButton></DockFooter>
    </DockBody>
  </>
);

const ProjectBrowser = () => (
  <>
    <DockHeader>项目浏览器 - 族1<CloseButton aria-label="关闭项目浏览器"><CloseGlyph /></CloseButton></DockHeader>
    <DockBody $fill>
      <Tree>
        <TreeRow><Branch first /><IconCell><ViewsIcon /></IconCell><TreeLabel $selected>视图 (全部)</TreeLabel></TreeRow>
        <TreeRow><Branch box /><IconCell><SheetsIcon /></IconCell><TreeLabel>图纸 (全部)</TreeLabel></TreeRow>
        <TreeRow><Branch /><IconCell><FamiliesIcon /></IconCell><TreeLabel>族</TreeLabel></TreeRow>
        <TreeRow><Branch box /><IconCell><GroupsIcon /></IconCell><TreeLabel>组</TreeLabel></TreeRow>
        <TreeRow><Branch last /><IconCell><LinksIcon /></IconCell><TreeLabel>Revit 链接</TreeLabel></TreeRow>
      </Tree>
    </DockBody>
  </>
);

const noteLines: [number, number, number][] = [
  [670, 676, 279], [670, 724, 282], [670, 679, 285],
  [670, 723, 291], [670, 682, 294], [670, 705, 300],
];

const Drawing = () => (
  <Canvas>
    <Watermark width="222" height="120" viewBox="0 0 222 120" fill="#fff" stroke="#d9d9d9" strokeWidth="2" strokeLinejoin="round" aria-hidden="true">
      <text x="-3" y="76" fontSize="49" fontFamily="'Liberation Sans', sans-serif" fontWeight="700">Bai</text>
      <ellipse cx="83" cy="35" rx="9" ry="11" transform="rotate(-10 83 35)" />
      <ellipse cx="99" cy="18" rx="8" ry="11" />
      <ellipse cx="119" cy="20" rx="9" ry="11" transform="rotate(8 119 20)" />
      <ellipse cx="131" cy="40" rx="9" ry="11" transform="rotate(12 131 40)" />
      <path d="M106 36c8 0 11 6 17 12 9 8 15 12 13 20-3 10-14 9-30 9s-26 1-29-8c-3-9 5-15 12-21 6-6 9-12 17-12z" />
      <text x="88" y="76" fontSize="30" fontFamily="'Liberation Sans', sans-serif" fontWeight="700">du</text>
      <text x="142" y="73" fontSize="37" fontFamily="'Noto Sans CJK SC', sans-serif" fontWeight="900">经验</text>
      <text x="0" y="107" fontSize="25" fontFamily="'Noto Sans', sans-serif" strokeWidth="1">jingyan</text>
    </Watermark>
    <Sheet fill="none" aria-hidden="true">
      <g stroke="#007400" strokeDasharray="9 9">
        <path d="M383 309.500h564" />
        <path d="M664.500 27v2000" />
      </g>
      <g stroke="#0a3cb4">
        <rect x="670.500" y="276.500" width="63" height="28" />
        {noteLines.map(([a, b, y]) => <path key={y} d={`M${a} ${y + 1}H${b}`} strokeWidth="2" strokeDasharray="3 .4 2 .3" />)}
        <path d="M662 276.500h17M670.500 268v17" />
        <path d="M662 276.500l4-3v6zM679 276.500l-3-2v4zM670.500 268l-3 3h6zM670.500 285l-3-3h6z" fill="#0a3cb4" stroke="none" />
        <circle cx="732.500" cy="276.500" r="5" /><path d="M726 276.500h13M733.500 270v12" /><path d="M732 269l5 3-5 3z" fill="#0a3cb4" stroke="none" />
      </g>
      <g fill="#7fb1ee" stroke="#56657c"><circle cx="670.500" cy="290.500" r="4" /><circle cx="733.500" cy="290.500" r="4" /></g>
    </Sheet>
    <Highlight />
    <Banner><BannerName>我爱学教程</BannerName><BannerUrl>www.52xjc.com</BannerUrl></Banner>
  </Canvas>
);

export default function App() {
  return (
    <Page>
      <GlobalStyle />
      <Gradients />
      <Header />
      <TabBar>
        <Tab $file>文件</Tab>
        {tabs.map((t) => <Tab key={t}>{t}</Tab>)}
        <Tab $active>修改 | 文字注释</Tab>
        <TabToggle aria-label="最小化功能区"><PanelToggle /><Caret color="#000" /></TabToggle>
      </TabBar>
      <RibbonTools />
      <OptionsBar>修改 | 文字注释</OptionsBar>
      <Workspace>
        <SidePanels>
          <PropertiesPalette />
          <ProjectBrowser />
        </SidePanels>
        <Drawing />
      </Workspace>
    </Page>
  );
}
